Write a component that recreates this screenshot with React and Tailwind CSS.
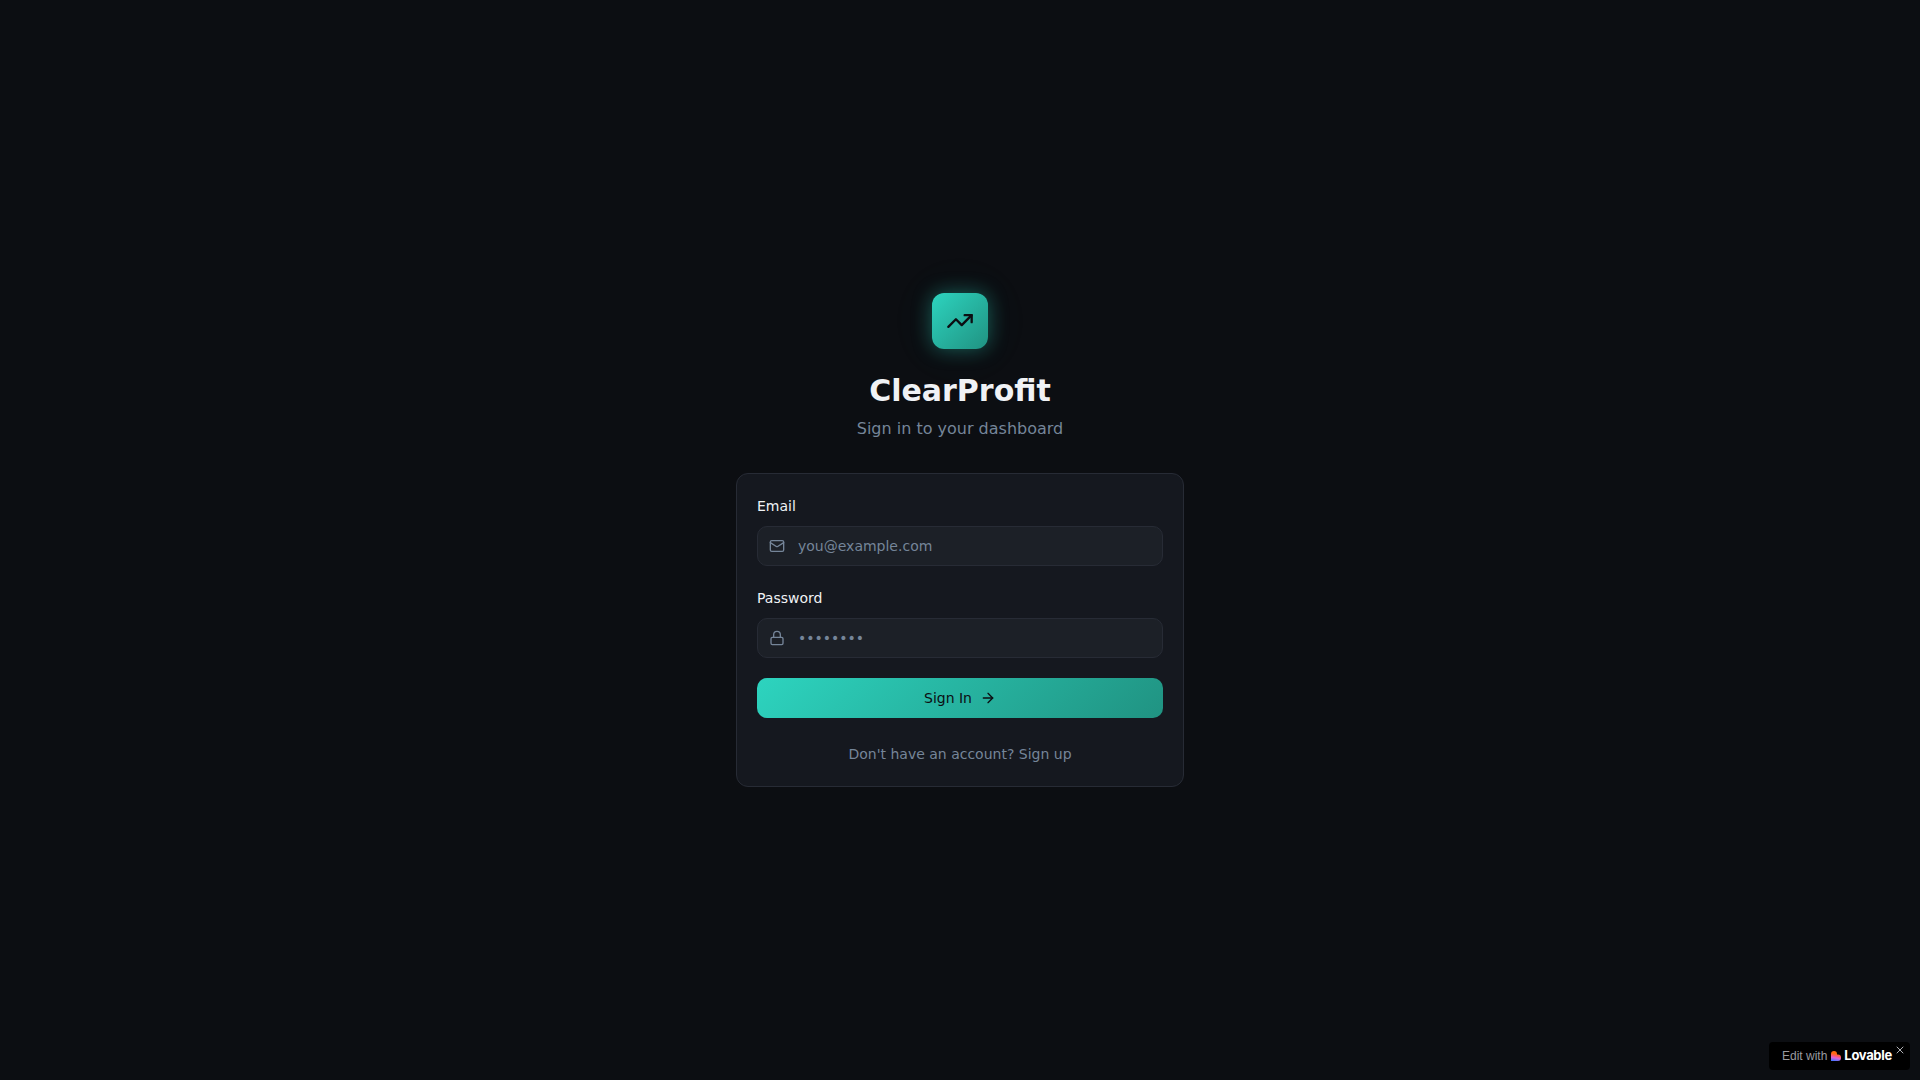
import React, { useState } from "react";
import { TrendingUp, Mail, Lock, ArrowRight, X } from "lucide-react";

function Field({ id, label, icon: Icon, ...props }) {
  return (
    <div>
      <label htmlFor={id} className="block mb-2 text-sm leading-6 font-medium text-[#f0f2f5]">
        {label}
      </label>
      <div className="relative">
        <Icon className="absolute left-3 top-3 w-4 h-4 text-[#758599]" />
        <input
          id={id}
          className="w-full h-10 pl-10 pr-3 py-2 rounded-[10px] border border-[#272b35] bg-[#1c2027] text-sm text-[#f0f2f5] placeholder:text-[#758599] outline-none focus:ring-2 focus:ring-[#2dd4bf]"
          {...props}
        />
      </div>
    </div>
  );
}

function LovableBadge({ onClose }) {
  return (
    <aside className="fixed right-[10px] bottom-[10px] h-7 w-[141px] pl-[13px] flex items-center rounded bg-black font-['Liberation_Sans',sans-serif]">
      <a href="#lovable" className="flex items-center text-xs text-[#9a9ba0] whitespace-nowrap">
        Edit with
        <svg viewBox="0 0 20 20" className="ml-1 w-[10px] h-[10px]" aria-hidden="true">
          <defs>
            <linearGradient id="heart" x1="0.6" y1="0" x2="0.4" y2="1">
              <stop offset="0.3" stopColor="#ff6a10" />
              <stop offset="0.5" stopColor="#fb5a6c" />
              <stop offset="0.7" stopColor="#dc62d8" />
              <stop offset="1" stopColor="#4b73ff" />
            </linearGradient>
          </defs>
          <path
            d="M6 0a6 6 0 0 1 6 6v1h2a6 6 0 0 1 6 6v1a6 6 0 0 1-6 6H0V6a6 6 0 0 1 6-6z"
            fill="url(#heart)"
          />
        </svg>
        <span className="ml-[3px] font-['Inter',sans-serif] text-[13px] font-bold tracking-tight text-white">Lovable</span>
      </a>
      <button
        type="button"
        aria-label="Close"
        onClick={onClose}
        className="absolute right-1 top-[2px] text-[#b0b1b5]"
      >
        <X className="w-3 h-3" />
      </button>
    </aside>
  );
}

export default function App() {
  const [isLogin, setIsLogin] = useState(true);
  const [showBadge, setShowBadge] = useState(true);
  const [email, setEmail] = useState("");
  const [password, setPassword] = useState("");

  return (
    <div className="min-h-screen flex items-center justify-center p-4 bg-[#0c0e12] font-['DejaVu_Sans',sans-serif]">
      <main className="w-full max-w-md">
        <header className="flex flex-col items-center mb-8 text-center">
          <div className="w-14 h-14 mb-6 flex items-center justify-center rounded-xl bg-linear-135 from-[#2dd4bf] to-[#209382] shadow-[0_0_20px_rgba(45,212,191,0.4),0_0_60px_rgba(45,212,191,0.05)]">
            <TrendingUp className="w-7 h-7 text-[#0c0e12]" />
          </div>
          <h1 className="mb-2 text-3xl font-bold text-[#f0f2f5]">ClearProfit</h1>
          <p className="text-[#758599]">
            {isLogin ? "Sign in to your dashboard" : "Create your account"}
          </p>
        </header>

        <section className="p-5 rounded-xl border border-[#272b35] bg-[#15181f]">
          <form className="space-y-5" onSubmit={(e) => e.preventDefault()}>
            <Field
              id="email"
              label="Email"
              icon={Mail}
              type="email"
              placeholder="you@example.com"
              value={email}
              onChange={(e) => setEmail(e.target.value)}
            />
            <Field
              id="password"
              label="Password"
              icon={Lock}
              type="password"
              placeholder="••••••••"
              value={password}
              onChange={(e) => setPassword(e.target.value)}
            />
            <button
              type="submit"
              className="w-full h-10 flex items-center justify-center gap-2 rounded-[10px] bg-linear-135 from-[#2dd4bf] to-[#209382] text-sm font-medium text-[#0c0e12]"
            >
              {isLogin ? "Sign In" : "Sign Up"}
              <ArrowRight className="w-4 h-4" />
            </button>
          </form>

          <div className="mt-6 text-center">
            <button
              type="button"
              onClick={() => setIsLogin(!isLogin)}
              className="text-sm leading-6 text-[#758599] hover:text-[#f0f2f5] transition-colors"
            >
              {isLogin ? "Don't have an account? Sign up" : "Already have an account? Sign in"}
            </button>
          </div>
        </section>
      </main>

      {showBadge && <LovableBadge onClose={() => setShowBadge(false)} />}
    </div>
  );
}
